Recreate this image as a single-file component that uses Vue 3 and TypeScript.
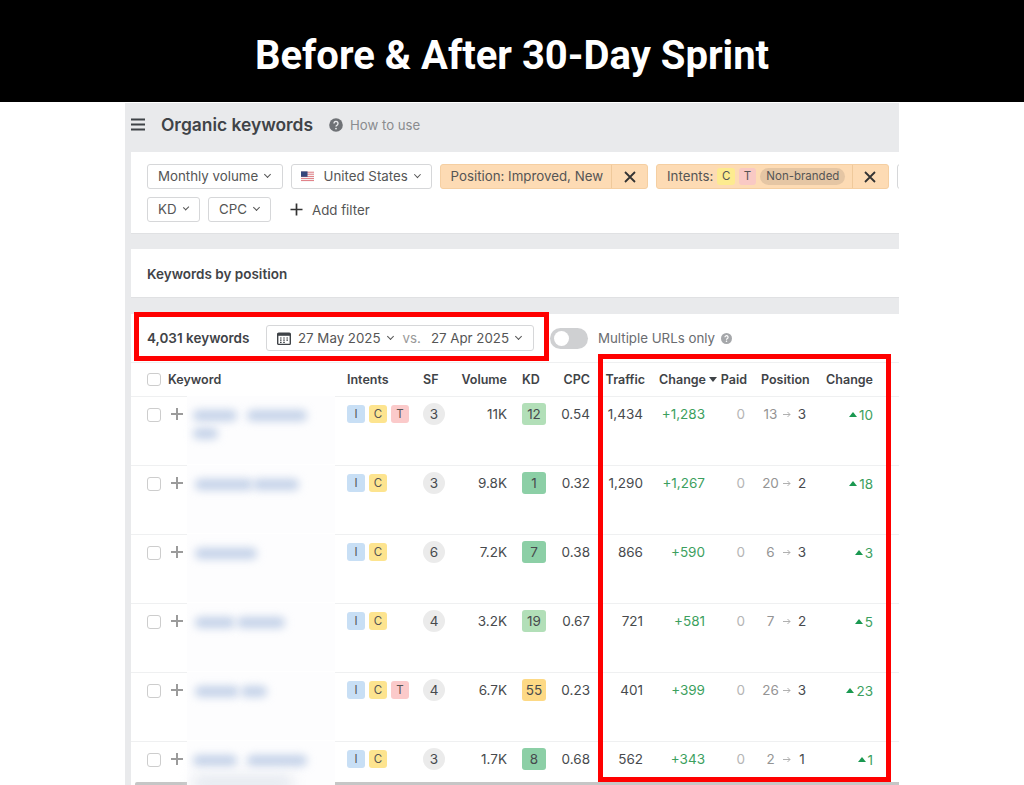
<script setup lang="ts">
interface Bar { w: number; x: number; y: number; faint?: boolean }
interface Row {
  bars: Bar[]; intents: string[]; sf: number; vol: string; kd: number; kdColor: string; cpc: string;
  traffic: string; change: string; from: number; to: number; delta: number
}
const G1 = '#8ccfa6', G2 = '#b2dfb8', Y = '#fdd985'
const long: Bar[] = [{ x: 6, y: 14, w: 44 }, { x: 60, y: 14, w: 60 }, { x: 6, y: 32, w: 25 }]
const rows: Row[] = [
  { bars: long, intents: ['I', 'C', 'T'], sf: 3, vol: '11K', kd: 12, kdColor: G2, cpc: '0.54', traffic: '1,434', change: '+1,283', from: 13, to: 3, delta: 10 },
  { bars: [{ x: 8, y: 14, w: 58 }, { x: 66, y: 14, w: 46 }], intents: ['I', 'C'], sf: 3, vol: '9.8K', kd: 1, kdColor: G1, cpc: '0.32', traffic: '1,290', change: '+1,267', from: 20, to: 2, delta: 18 },
  { bars: [{ x: 8, y: 14, w: 62 }], intents: ['I', 'C'], sf: 6, vol: '7.2K', kd: 7, kdColor: G1, cpc: '0.38', traffic: '866', change: '+590', from: 6, to: 3, delta: 3 },
  { bars: [{ x: 8, y: 14, w: 40 }, { x: 50, y: 14, w: 48 }], intents: ['I', 'C'], sf: 4, vol: '3.2K', kd: 19, kdColor: G2, cpc: '0.67', traffic: '721', change: '+581', from: 7, to: 2, delta: 5 },
  { bars: [{ x: 8, y: 14, w: 44 }, { x: 54, y: 14, w: 26 }], intents: ['I', 'C', 'T'], sf: 4, vol: '6.7K', kd: 55, kdColor: Y, cpc: '0.23', traffic: '401', change: '+399', from: 26, to: 3, delta: 23 },
  { bars: [{ x: 6, y: 14, w: 44 }, { x: 60, y: 14, w: 60 }, { x: 6, y: 34, w: 100, faint: true }], intents: ['I', 'C'], sf: 3, vol: '1.7K', kd: 8, kdColor: G1, cpc: '0.68', traffic: '562', change: '+343', from: 2, to: 1, delta: 1 }
]
</script>

<template>
  <div class="page">
    <header class="banner">Before &amp; After 30-Day Sprint</header>

    <main class="panel">
      <div class="topbar">
        <svg class="burger" width="14" height="13" viewBox="0 0 14 13"><path d="M0 1.5h14M0 6.5h14M0 11.5h14" stroke="#3f4347" stroke-width="1.8" /></svg>
        <h1 class="title">Organic keywords</h1>
        <svg class="help" width="14" height="14" viewBox="0 0 14 14"><circle cx="7" cy="7" r="6.8" fill="#6f7276" /><path d="M5 5.4a2 2 0 1 1 3.1 1.7c-.7.4-1.1.8-1.1 1.5" fill="none" stroke="#e9eaec" stroke-width="1.4" /><circle cx="7" cy="10.6" r=".9" fill="#e9eaec" /></svg>
        <span class="how">How to use</span>
      </div>

      <section class="filters">
        <div class="filter-row">
          <button class="chip w135">Monthly volume <i class="chev"></i></button>
          <button class="chip w141">
            <svg class="flag" width="14" height="11" viewBox="0 0 14 11">
              <rect width="14" height="11" fill="#f4f0f0" />
              <path d="M0 1h14M0 3.2h14M0 5.4h14M0 7.6h14M0 9.8h14" stroke="#e2838a" stroke-width="1.1" />
              <rect width="7" height="5.8" fill="#34477c" />
            </svg>
            United States <i class="chev"></i>
          </button>
          <div class="tag w209"><span class="tag-main">Position: Improved, New</span><span class="tag-x"><svg width="12" height="12" viewBox="0 0 12 12"><path d="M1 1l10 10M11 1L1 11" stroke="#333" stroke-width="1.8" /></svg></span></div>
          <div class="tag w233">
            <span class="tag-main intents-tag">Intents:
              <b class="mini c">C</b><b class="mini t">T</b><b class="pill">Non-branded</b>
            </span>
            <span class="tag-x"><svg width="12" height="12" viewBox="0 0 12 12"><path d="M1 1l10 10M11 1L1 11" stroke="#333" stroke-width="1.8" /></svg></span>
          </div>
          <div class="chip clipped"></div>
        </div>
        <div class="filter-row">
          <button class="chip w53">KD <i class="chev"></i></button>
          <button class="chip w63">CPC <i class="chev"></i></button>
          <button class="add">
            <svg width="13" height="13" viewBox="0 0 13 13"><path d="M6.5 0.5v12M0.5 6.5h12" stroke="#333" stroke-width="1.7" /></svg>
            Add filter
          </button>
        </div>
      </section>

      <section class="bypos">Keywords by position</section>

      <section class="table">
        <div class="toolbar">
          <strong class="count">4,031 keywords</strong>
          <div class="dates">
            <svg width="14" height="13" viewBox="0 0 14 13"><rect x=".7" y="1.2" width="12.6" height="11.2" rx="1" fill="none" stroke="#3f4347" stroke-width="1.4" /><rect x=".7" y="1.2" width="12.6" height="2.6" fill="#3f4347" /><path d="M3 6h1.6M6.2 6h1.6M9.4 6H11M3 8.2h1.6M6.2 8.2h1.6M9.4 8.2H11M3 10.4h1.6M6.2 10.4h1.6" stroke="#3f4347" stroke-width="1.2" /></svg>
            <span class="date">27 May 2025 <i class="chev"></i></span>
            <span class="vs">vs.</span>
            <span class="date">27 Apr 2025 <i class="chev"></i></span>
          </div>
          <span class="toggle"><span class="knob"></span></span>
          <span class="multi">Multiple URLs only</span>
          <svg width="11" height="11" viewBox="0 0 14 14"><circle cx="7" cy="7" r="7" fill="#a5a7aa" /><path d="M5 5.4a2 2 0 1 1 3.1 1.7c-.7.4-1.1.8-1.1 1.5" fill="none" stroke="#fff" stroke-width="1.5" /><circle cx="7" cy="10.6" r="1" fill="#fff" /></svg>
        </div>

        <div class="grid head">
          <span class="box"></span>
          <span>Keyword</span>
          <span>Intents</span>
          <span>SF</span>
          <span class="r">Volume</span>
          <span class="kd-head">KD</span>
          <span class="r">CPC</span>
          <span class="r">Traffic</span>
          <span class="r sort">Change <i class="caret"></i></span>
          <span class="r">Paid</span>
          <span class="pos-head">Position</span>
          <span class="r">Change</span>
        </div>

        <div v-for="row in rows" :key="row.traffic" class="grid row">
          <span class="box in-row"></span>
          <div class="kw">
            <svg class="plus" width="12" height="12" viewBox="0 0 12 12"><path d="M6 0v12M0 6h12" stroke="#9b9b9b" stroke-width="2" /></svg>
            <div class="redact">
              <span v-for="(b, i) in row.bars" :key="i" class="bar" :class="{ faint: b.faint }" :style="{ left: b.x + 'px', top: b.y + 'px', width: b.w + 'px' }"></span>
            </div>
          </div>
          <div class="intents">
            <b v-for="t in row.intents" :key="t" class="badge" :class="'b-' + t">{{ t }}</b>
          </div>
          <div><span class="sf">{{ row.sf }}</span></div>
          <span class="r">{{ row.vol }}</span>
          <div class="kd-cell"><span class="kd" :style="{ background: row.kdColor }">{{ row.kd }}</span></div>
          <span class="r">{{ row.cpc }}</span>
          <span class="r traffic">{{ row.traffic }}</span>
          <span class="r green ch">{{ row.change }}</span>
          <span class="r zero">0</span>
          <div class="pos">
            <span class="from">{{ row.from }}</span>
            <svg width="8" height="7" viewBox="0 0 8 7"><path d="M0 3.5h7M4.5 1l2.5 2.5L4.5 6" fill="none" stroke="#b0b0b0" stroke-width="1" /></svg>
            <span class="to">{{ row.to }}</span>
          </div>
          <span class="r green delta"><i class="tri"></i>{{ row.delta }}</span>
        </div>

        <div class="scrollbar"></div>
      </section>
    </main>

    <div class="mark mark-a"></div>
    <div class="mark mark-b"></div>
  </div>
</template>

<style>
html, body { margin: 0; background: #fff; }
</style>

<style scoped>
.page { position: relative; width: 1024px; height: 785px; overflow: hidden; background: #fff; font-family: Inter, "Liberation Sans", sans-serif; font-size: 14px; color: #444; }
.banner { height: 102px; background: #000; color: #fff; font: 700 40px/112px Roboto, "Liberation Sans", sans-serif; text-align: center; }
.panel { box-sizing: border-box; width: 774px; height: 682px; margin: 1px 0 0 125px; padding-left: 6px; background: #e9eaec; display: flex; flex-direction: column; }
.topbar { height: 49px; box-sizing: border-box; padding-bottom: 6px; flex: none; display: flex; align-items: center; }
.burger { margin-right: 16px; }
.title { margin: 0 16px 0 0; font-size: 17.4px; font-weight: 600; color: #3f4347; }
.how { margin-left: 7px; font-size: 13.2px; color: #8a8c8f; }
.filters { height: 82px; flex: none; box-sizing: border-box; padding: 12px 0 0 16px; background: #fff; border-bottom: 1px solid #e0e1e3; display: flex; flex-direction: column; gap: 8px; overflow: hidden; }
.filter-row { display: flex; gap: 8px; height: 25px; flex: none; }
.chip { box-sizing: border-box; height: 25px; padding: 0 10px 1px; background: #fff; border: 1px solid #d6d7d9; border-radius: 3px; font: 13.3px Inter, "Liberation Sans", sans-serif; color: #555; display: flex; align-items: center; gap: 6px; white-space: nowrap; flex: none; }
.w135 { width: 135.5px; } .w141 { width: 141px; } .w53 { width: 53px; } .w63 { width: 63px; }
.clipped { width: 40px; }
.chev { display: inline-block; width: 4px; height: 4px; margin: -3px 1px 0 1px; border-right: 1px solid #555; border-bottom: 1px solid #555; transform: rotate(45deg); }
.flag { margin: 1px 4px 0 -1px; }
.tag { box-sizing: border-box; height: 25px; flex: none; display: flex; align-items: stretch; background: #fddbb4; border: 1px solid #f5cfa2; border-radius: 3px; font-size: 13.3px; color: #555; white-space: nowrap; }
.w209 { width: 208.5px; } .w233 { width: 232.5px; }
.tag-main { flex: 1; display: flex; align-items: center; padding: 0 0 1px 10px; }
.intents-tag { gap: 4px; }
.tag-x { width: 35px; flex: none; display: flex; align-items: center; justify-content: center; border-left: 1px solid #efc99b; }
.mini { width: 17.5px; height: 17px; border-radius: 3px; display: inline-flex; align-items: center; justify-content: center; font-size: 11.5px; font-weight: 400; }
.mini.c { background: #fdeb8f; } .mini.t { background: #f9c9c4; }
.pill { height: 17px; padding: 0 6px; border-radius: 9px; background: #e5c6a4; font-size: 11.5px; font-weight: 400; display: inline-flex; align-items: center; }
.add { margin-left: 11px; padding: 0; background: none; border: 0; display: flex; align-items: center; gap: 9px; font: 13.3px Inter, "Liberation Sans", sans-serif; color: #555; }
.bypos { height: 49px; flex: none; margin-top: 15px; box-sizing: border-box; padding: 1px 0 0 16px; background: #fff; border-bottom: 1px solid #e0e1e3; display: flex; align-items: center; font-size: 13.5px; font-weight: 600; color: #3f4347; }
.table { position: relative; flex: 1; margin-top: 16px; background: #fff; overflow: hidden; min-height: 0; }
.toolbar { height: 48px; box-sizing: border-box; padding-left: 16px; display: flex; align-items: center; }
.count { width: 119px; font-size: 13.5px; font-weight: 600; color: #3f4347; flex: none; }
.dates { box-sizing: border-box; width: 268px; height: 26px; flex: none; padding-left: 10px; border: 1px solid #d6d7d9; border-radius: 3px; display: flex; align-items: center; font-size: 13.3px; color: #555; white-space: nowrap; }
.date { margin-left: 7px; display: inline-flex; align-items: center; gap: 6px; }
.vs { margin: 0 3px 0 9px; color: #999; }
.toggle { position: relative; box-sizing: border-box; width: 38px; height: 21px; margin-left: 16px; padding: 3px 4px; flex: none; border-radius: 11px; background: #cfd0d2; }
.knob { display: block; width: 15px; height: 15px; border-radius: 50%; background: #fff; }
.multi { margin: 0 6px 0 10px; font-size: 13.3px; color: #6a6c70; }
.grid { display: grid; grid-template-columns: 21px 179px 76px 30px 54px 39px 44px 55px 72px 30px 63px 63px; padding-left: 16px; border-top: 1px solid #eff0f1; }
.head { height: 34px; box-sizing: border-box; align-items: center; font-size: 12.5px; font-weight: 600; color: #3f4347; white-space: nowrap; }
.r { text-align: right; }
.sort { display: flex; justify-content: flex-end; align-items: center; gap: 3px; }
.caret { width: 0; height: 0; border: 4px solid transparent; border-top: 5px solid #3f4347; border-bottom: 0; margin-right: 0; }
.kd-head { padding-left: 15px; }
.pos-head { padding-left: 14px; }
.box { box-sizing: border-box; display: block; width: 13.5px; height: 13.5px; background: #fff; border: 1px solid #cdcdcd; border-radius: 3px; }
.box.in-row { margin-top: 5px; }
.row { position: relative; height: 69px; box-sizing: border-box; padding-top: 6px; align-items: start; line-height: 22px; font-size: 13.5px; color: #474a4d; }
.kw { position: relative; height: 22px; }
.plus { position: absolute; left: 3px; top: 5px; }
.redact { position: absolute; z-index: 1; left: 19px; top: -7px; width: 148px; height: 68px; background: #fdfdfe; }
.bar { position: absolute; height: 11px; border-radius: 6px; background: #c3d1e8; filter: blur(4.5px); }
.bar.faint { height: 16px; background: #e4e8ef; filter: blur(7px); }
.intents { display: flex; gap: 4px; padding-top: 2px; }
.badge { width: 18px; height: 18px; border-radius: 3px; font-size: 11.5px; line-height: 18px; font-weight: 400; text-align: center; color: #555; }
.b-I { background: #c8dff5; } .b-C { background: #fde48f; } .b-T { background: #fbcaca; }
.sf { display: block; width: 22px; height: 22px; border-radius: 50%; background: #ebebeb; text-align: center; font-size: 13.5px; }
.kd-cell { padding-left: 15px; }
.kd { display: block; width: 24px; height: 22px; border-radius: 3px; text-align: center; font-size: 13.5px; }
.traffic { padding-right: 2px; }
.green { color: #3c9f5e; }
.ch { padding-right: 12px; }
.zero { padding-right: 2px; color: #b5b5b5; }
.pos { display: flex; align-items: center; height: 22px; padding-left: 15px; }
.from { width: 17px; text-align: center; color: #949494; margin-right: 4px; }
.to { width: 10px; margin-left: 6px; text-align: center; color: #474a4d; }
.delta { display: flex; justify-content: flex-end; align-items: center; height: 23px; }
.tri { width: 0; height: 0; margin-right: 2px; border: 4px solid transparent; border-top: 0; border-bottom: 5px solid #1a9850; }
.scrollbar { position: absolute; left: 4px; right: 0; bottom: 0; height: 3px; background: #c6c6c6; border-radius: 2px 0 0 0; }
.mark { position: absolute; box-sizing: border-box; border: 5px solid #ff0000; pointer-events: none; }
.mark-a { left: 134px; top: 312px; width: 415px; height: 49px; }
.mark-b { left: 598px; top: 354px; width: 293px; height: 428px; }
</style>
